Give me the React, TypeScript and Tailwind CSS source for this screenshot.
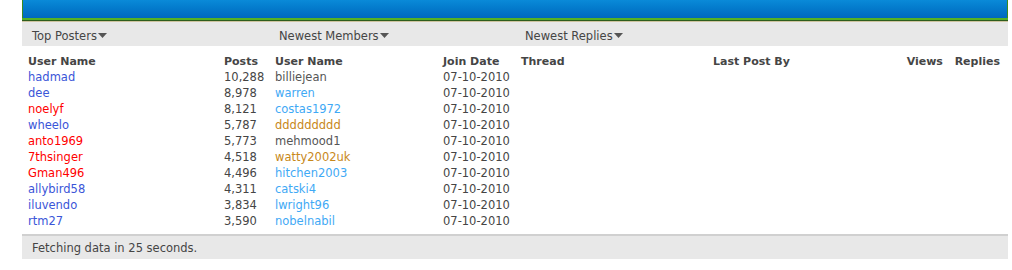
import React from "react";

const posters: [string, string, string][] = [
  ["hadmad", "10,288", "text-[#3a55d8]"],
  ["dee", "8,978", "text-[#3a55d8]"],
  ["noelyf", "8,121", "text-[#ff0000]"],
  ["wheelo", "5,787", "text-[#3a55d8]"],
  ["anto1969", "5,773", "text-[#ff0000]"],
  ["7thsinger", "4,518", "text-[#ff0000]"],
  ["Gman496", "4,496", "text-[#ff0000]"],
  ["allybird58", "4,311", "text-[#3a55d8]"],
  ["iluvendo", "3,834", "text-[#3a55d8]"],
  ["rtm27", "3,590", "text-[#3a55d8]"],
];

const members: [string, string][] = [
  ["billiejean", "text-[#555555]"],
  ["warren", "text-[#3fa9f5]"],
  ["costas1972", "text-[#3fa9f5]"],
  ["ddddddddd", "text-[#c8881a]"],
  ["mehmood1", "text-[#555555]"],
  ["watty2002uk", "text-[#c8881a]"],
  ["hitchen2003", "text-[#3fa9f5]"],
  ["catski4", "text-[#3fa9f5]"],
  ["lwright96", "text-[#3fa9f5]"],
  ["nobelnabil", "text-[#3fa9f5]"],
];

function Caret() {
  return (
    <svg width="9" height="5" viewBox="0 0 9 5" className="ml-[1px]">
      <path d="M0 0h9L4.5 5z" fill="#555" />
    </svg>
  );
}

export default function App() {
  return (
    <div
      className="w-[1012px] h-[270px] bg-white text-[11.5px] text-[#454545] leading-[16px]"
      style={{ fontFamily: "'DejaVu Sans', sans-serif" }}
    >
      <div className="ml-[22px] w-[986px]">
        <div className="h-[18px] bg-gradient-to-b from-[#0a8ad8] to-[#0068be] border-x border-[#3c8a1e]" />
        <div className="h-[2px] bg-[#55b024]" />
        <div className="h-[1px] bg-[#2e5d1e]" />
        <div className="h-[1px] bg-[#cfc4a0]" />
        <div className="h-[24px] bg-[#e8e8e8] flex items-center pt-[3px]">
          <div className="w-[247px] pl-[10px] flex items-center">
            Top Posters<Caret />
          </div>
          <div className="w-[246px] pl-[10px] flex items-center">
            Newest Members<Caret />
          </div>
          <div className="w-[246px] pl-[10px] flex items-center">
            Newest Replies<Caret />
          </div>
        </div>
        <div className="flex pt-[8px] pb-[5px] border-b-2 border-[#d0d0d0]">
          <div className="w-[247px] pl-[6px] flex">
            <div className="w-[196px]">
              <div className="font-bold text-[11px] h-[15px]">User Name</div>
              {posters.map(([n, , c]) => (
                <div key={n} className={c}>{n}</div>
              ))}
            </div>
            <div>
              <div className="font-bold text-[11px] h-[15px]">Posts</div>
              {posters.map(([n, p]) => (
                <div key={n}>{p}</div>
              ))}
            </div>
          </div>
          <div className="w-[252px] pl-[6px] flex">
            <div className="w-[168px]">
              <div className="font-bold text-[11px] h-[15px]">User Name</div>
              {members.map(([n, c]) => (
                <div key={n} className={c}>{n}</div>
              ))}
            </div>
            <div>
              <div className="font-bold text-[11px] h-[15px]">Join Date</div>
              {members.map(([n]) => (
                <div key={n}>07-10-2010</div>
              ))}
            </div>
          </div>
          <div className="flex-1 pr-[8px] flex font-bold text-[11px] h-[15px]">
            <div className="w-[192px]">Thread</div>
            <div className="flex-1">Last Post By</div>
            <div className="w-[48px]">Views</div>
            <div>Replies</div>
          </div>
        </div>
        <div className="h-[23px] bg-[#e8e8e8] pl-[10px] flex items-center">
          Fetching data in 25 seconds.
        </div>
      </div>
    </div>
  );
}
